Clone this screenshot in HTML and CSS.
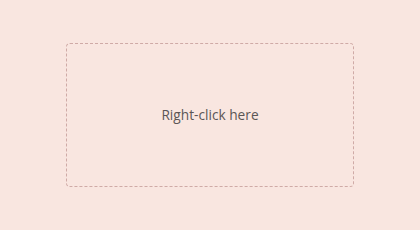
FILE: index.html
```html
<!DOCTYPE html>
<html>
<head>
<meta charset="utf-8">
<link rel="stylesheet" href="styles.css">
</head>
<body>
<div class="page">
  <div class="target">Right-click here</div>
</div>
</body>
</html>
```
FILE: styles.css
```css
html, body {
  margin: 0;
  padding: 0;
  background: #f9e6e0;
}
.page {
  width: 420px;
  height: 230px;
  display: flex;
  justify-content: center;
  padding-top: 43px;
  box-sizing: border-box;
}
.target {
  width: 288px;
  height: 144px;
  box-sizing: border-box;
  border: 1px dashed #cfaaa6;
  border-radius: 4px;
  display: flex;
  align-items: center;
  justify-content: center;
  padding-bottom: 2px;
  font-family: "Open Sans", "Noto Sans", sans-serif;
  font-size: 13.7px;
  color: #5b5656;
}
```
